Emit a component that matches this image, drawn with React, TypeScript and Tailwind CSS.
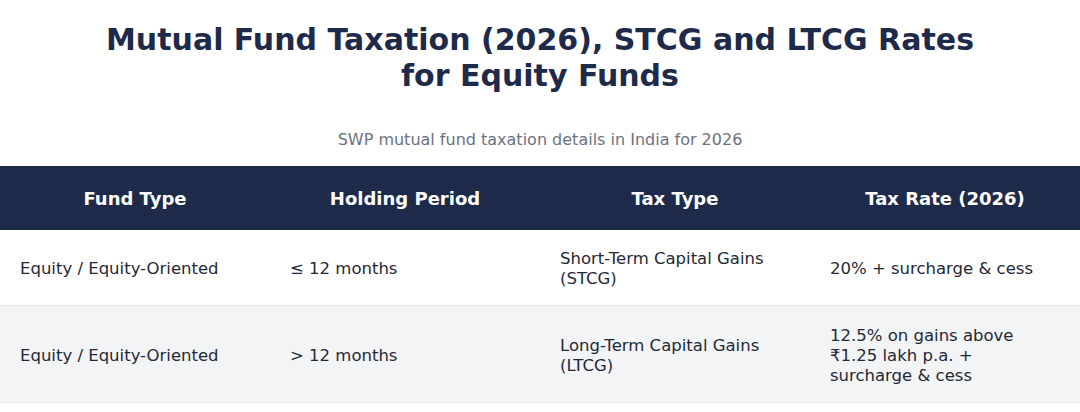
const rows = [
  {
    fund: "Equity / Equity-Oriented",
    period: "≤ 12 months",
    type: "Short-Term Capital Gains (STCG)",
    rate: "20% + surcharge & cess",
    height: "h-[75px]",
  },
  {
    fund: "Equity / Equity-Oriented",
    period: "> 12 months",
    type: "Long-Term Capital Gains (LTCG)",
    rate: "12.5% on gains above ₹1.25 lakh p.a. + surcharge & cess",
    height: "h-[97px]",
  },
];

const headers = ["Fund Type", "Holding Period", "Tax Type", "Tax Rate (2026)"];

export default function App() {
  return (
    <div className="w-[1080px] bg-white font-['DejaVu_Sans',sans-serif] pt-[22px]">
      <h1 className="text-center text-[30px] leading-9 font-bold text-[#1e2a4a] px-24">
        Mutual Fund Taxation (2026), STCG and LTCG Rates for Equity Funds
      </h1>
      <p className="mt-[34px] text-center text-base leading-6 text-[#6b7280]">
        SWP mutual fund taxation details in India for 2026
      </p>

      <table className="mt-[14px] w-full table-fixed border-collapse">
        <thead>
          <tr className="h-[64px] bg-[#1e2a4a]">
            {headers.map((h) => (
              <th key={h} className="px-5 pt-[1px] text-center text-[18px] leading-5 font-bold text-white">
                {h}
              </th>
            ))}
          </tr>
        </thead>
        <tbody>
          {rows.map((row, i) => (
            <tr
              key={i}
              className={`${row.height} border-b border-[#e5e7eb] ${i % 2 === 1 ? "bg-[#f3f4f6]" : "bg-white"}`}
            >
              {[row.fund, row.period, row.type, row.rate].map((cell, j) => (
                <td key={j} className="pt-[4px] pb-0 px-5 text-left align-middle text-[16.5px] leading-5 text-[#1f2937]">
                  {cell}
                </td>
              ))}
            </tr>
          ))}
        </tbody>
      </table>
    </div>
  );
}
